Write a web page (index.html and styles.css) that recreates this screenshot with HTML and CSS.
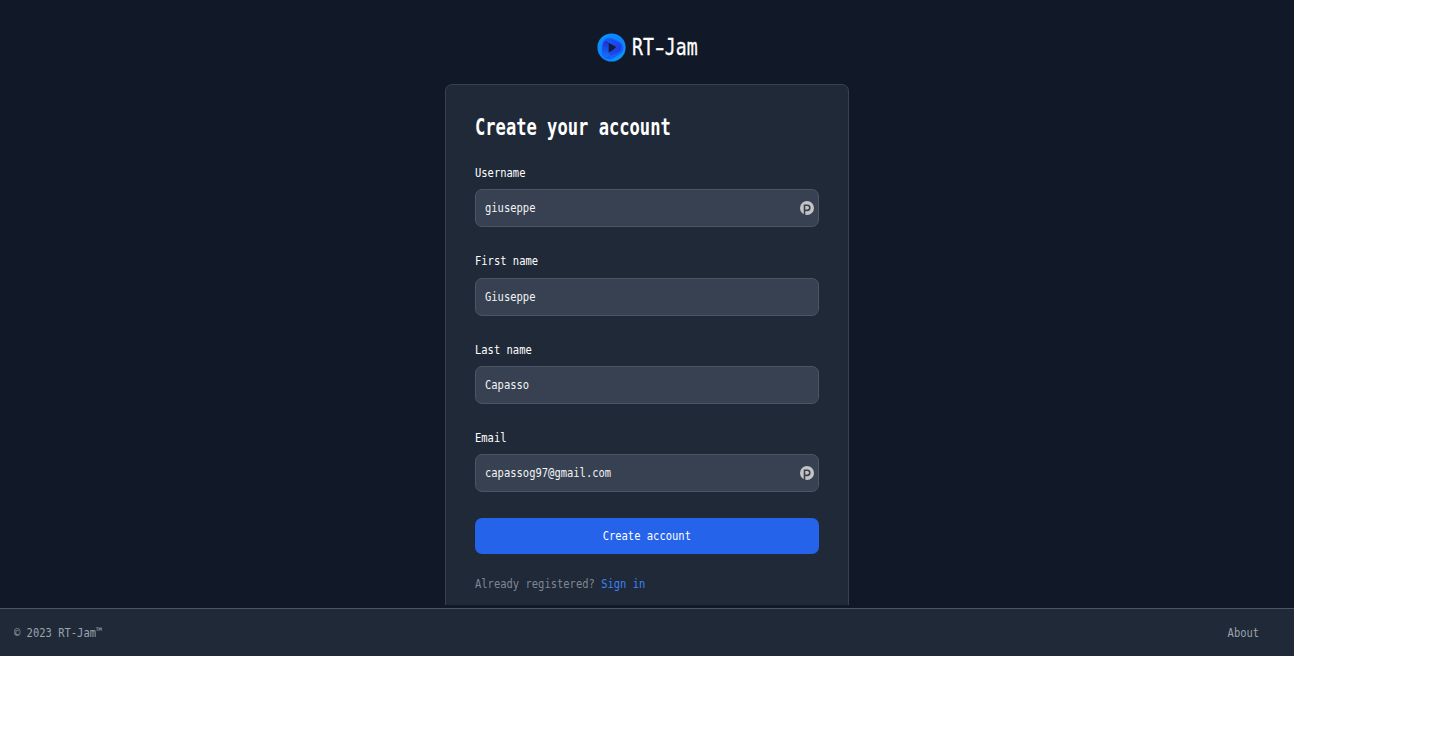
FILE: index.html
```
<!DOCTYPE html>
<html lang="en">
<head>
<meta charset="utf-8">
<title>RT-Jam</title>
<link rel="stylesheet" href="styles.css">
</head>
<body>
<div class="app">
  <main class="main">
    <a class="brand">
      <svg class="logo" viewBox="0 0 30 30">
        <defs>
          <linearGradient id="ring" x1="0" y1="0" x2="1" y2="1"><stop offset="0" stop-color="#0b98fa"/><stop offset=".5" stop-color="#0a80ff"/><stop offset="1" stop-color="#08a0f8"/></linearGradient>
          <linearGradient id="top" x1="0" y1="0" x2="1" y2=".6"><stop offset="0" stop-color="#1a5cf5"/><stop offset="1" stop-color="#1f3be0"/></linearGradient>
          <linearGradient id="side" x1="0" y1="0" x2="0" y2="1"><stop offset="0" stop-color="#1c2fd0"/><stop offset="1" stop-color="#1470fc"/></linearGradient>
        </defs>
        <circle cx="15" cy="15" r="14.6" fill="url(#ring)"/>
        <path d="M5.500 11C7 4.500 13 4 17 6L24 9.500C29 13 28.500 19 23.500 22L16 26.500C11 29 5 25 5 19Z" fill="#1560f8"/>
        <path d="M6 10C8 5.500 13 5 17 7L22.500 9.500C27 12.500 26 18.500 21 20.500L14 23.500L13 20L20 15L12 10.500Z" fill="url(#top)"/>
        <path d="M12 10.500V21.500C12 26 8 26 6.500 22C5 18 5 13 7 10C9 7.500 11 8 12 10.500Z" fill="url(#side)"/>
        <path d="M12 10.200L20 14.600Q17 18 12 20.500Z" fill="#111c45"/>
      </svg>
      <span class="brand-name">RT<span class="dash">-</span>Jam</span>
    </a>
    <section class="card">
      <h1 class="title"><span class="title-text">Create your account</span></h1>
      <form class="form">
        <div class="field">
          <label class="label"><span class="t">Username</span></label>
          <div class="input"><span class="t">giuseppe</span>
            <svg class="pass" viewBox="0 0 14 14"><circle cx="7" cy="7" r="7" fill="#c4c4c4"/><path d="M4.500 14V4.200H7.200A2.600 2.600 0 0 1 7.200 9.400H4.500" fill="none" stroke="#374151" stroke-width="1.600"/></svg>
          </div>
        </div>
        <div class="field tall">
          <label class="label"><span class="t">First name</span></label>
          <div class="input"><span class="t">Giuseppe</span></div>
        </div>
        <div class="field">
          <label class="label"><span class="t">Last name</span></label>
          <div class="input"><span class="t">Capasso</span></div>
        </div>
        <div class="field last">
          <label class="label"><span class="t">Email</span></label>
          <div class="input"><span class="t">capassog97@gmail.com</span>
            <svg class="pass" viewBox="0 0 14 14"><circle cx="7" cy="7" r="7" fill="#c4c4c4"/><path d="M4.500 14V4.200H7.200A2.600 2.600 0 0 1 7.200 9.400H4.500" fill="none" stroke="#374151" stroke-width="1.600"/></svg>
          </div>
        </div>
        <div class="button"><span class="t center">Create account</span></div>
        <p class="signin"><span class="t">Already registered? <a class="link">Sign in</a></span></p>
      </form>
    </section>
  </main>
  <footer class="footer">
    <span class="t">© 2023 RT-Jam™</span>
    <span class="t end">About</span>
  </footer>
</div>
</body>
</html>
```
FILE: styles.css
```
* { box-sizing: border-box; }
body {
  margin: 0;
  background: #fff;
  color: #fff;
  font: 13px/18px "DejaVu Sans Mono", monospace;
}
.app {
  width: 1294px;
  height: 656px;
  background: #111827;
  display: flex;
  flex-direction: column;
}
.main {
  height: 605px;
  margin-bottom: 3px;
  padding-top: 33px;
  overflow: hidden;
  display: flex;
  flex-direction: column;
  align-items: center;
}
.brand {
  display: flex;
  gap: 6px;
  width: 101px;
  height: 29px;
  margin-bottom: 22px;
  flex: none;
}
.logo { width: 29px; height: 29px; flex: none; }
.brand-name {
  font-size: 23px;
  line-height: 29px;
  white-space: nowrap;
  transform: scaleX(.79);
  transform-origin: left;
  -webkit-text-stroke: .3px #fff;
}
.dash { display: inline-block; transform: scaleX(1.5); }
.card {
  width: 403.4px;
  height: 560px;
  flex: none;
  padding: 29px 28.7px;
  background: #1f2937;
  border: 1px solid #374151;
  border-radius: 7px;
}
.title { margin: 0; height: 29px; font-size: 23px; line-height: 26px; font-weight: 700; }
.title-text { display: inline-block; white-space: nowrap; transform: scaleX(.744); transform-origin: left; }
.t { display: inline-block; white-space: pre; transform: scaleX(.806); transform-origin: left; }
.center { transform-origin: center; }
.end { transform-origin: right; }
.form { padding-top: 21px; }
.field { height: 88px; }
.label { display: block; height: 25px; line-height: 17px; }
.tall { height: 89px; }
.tall .label { height: 26px; }
.last { height: 89px; }
.input {
  display: flex;
  align-items: center;
  justify-content: space-between;
  height: 38px;
  padding: 0 4px 0 9.4px;
  background: #374151;
  border: 1px solid #4b5563;
  border-radius: 7px;
  color: #f3f4f6;
}
.pass { width: 14px; height: 14px; }
.button {
  display: flex;
  align-items: center;
  justify-content: center;
  height: 36px;
  border-radius: 7px;
  background: #2563eb;
}
.signin { margin: 21px 0 0; color: #7e8795; }
.link { color: #3b82f6; }
.footer {
  height: 48px;
  padding: 0 35px 0 14px;
  display: flex;
  align-items: center;
  justify-content: space-between;
  background: #1f2937;
  border-top: 1px solid #4b5563;
  color: #9ca3af;
}
```
